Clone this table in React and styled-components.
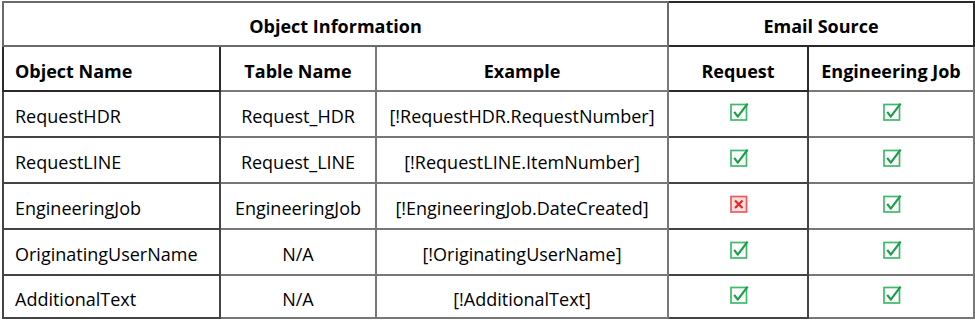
import React from 'react';
import styled, {createGlobalStyle} from 'styled-components';

const GlobalStyle = createGlobalStyle`
  html, body {
    margin: 0;
    background: #ffffff;
  }
  body {
    font-family: "Open Sans", "Noto Sans", sans-serif;
    color: #000;
  }
`;

const Wrap = styled.div`
  padding: 1px 2px 0 2px;
  width: 975px;
  box-sizing: border-box;
`;

const Table = styled.table`
  border-collapse: collapse;
  table-layout: fixed;
  width: 971px;
  font-size: 18px;
  border: 2px solid #3a3a3a;
`;

const Row = styled.tr`
  height: ${p => p.$h || 46}px;
`;

const Cell = styled.td`
  padding: 4px 11px 0 11px;
  box-sizing: border-box;
  text-align: ${p => (p.$left ? 'left' : 'center')};
  vertical-align: middle;
  border: 2px solid ${p => p.$line || '#555'};
  font-weight: ${p => (p.$bold ? 700 : 400)};
  white-space: nowrap;
`;

const HeadCell = styled(Cell).attrs({as: 'th'})``;

const Mark = styled.svg`
  display: block;
  margin: -9px auto 0 auto;
  width: 19px;
  height: 19px;
  position: relative;
  left: 1px;
`;

const Check = () => (
  <Mark viewBox="0 0 19 19">
    <rect x="1" y="2.5" width="15.5" height="15.5" fill="#fff" stroke="#3dbb6a" strokeWidth="1.7" />
    <path d="M4.2 9.8 L7.8 14.6 L17.6 1.6" fill="none" stroke="#1f9d4c" strokeWidth="2.2" strokeLinejoin="round" />
  </Mark>
);

const Cross = () => (
  <Mark viewBox="0 0 19 19">
    <rect x="1" y="2.5" width="15.5" height="15.5" fill="#fde0e0" stroke="#f2585c" strokeWidth="1.7" />
    <path d="M5 6.5 L12.5 14 M12.5 6.5 L5 14" fill="none" stroke="#e8232a" strokeWidth="2.2" />
  </Mark>
);

const rows = [
  {name: 'RequestHDR', table: 'Request_HDR', example: '[!RequestHDR.RequestNumber]', request: true, job: true},
  {name: 'RequestLINE', table: 'Request_LINE', example: '[!RequestLINE.ItemNumber]', request: true, job: true},
  {name: 'EngineeringJob', table: 'EngineeringJob', example: '[!EngineeringJob.DateCreated]', request: false, job: true},
  {name: 'OriginatingUserName', table: 'N/A', example: '[!OriginatingUserName]', request: true, job: true},
  {name: 'AdditionalText', table: 'N/A', example: '[!AdditionalText]', request: true, job: true},
];

const App = () => (
  <>
    <GlobalStyle />
    <Wrap>
      <Table>
        <colgroup>
          <col style={{width: 217}} />
          <col style={{width: 156}} />
          <col style={{width: 292}} />
          <col style={{width: 140}} />
          <col style={{width: 166}} />
        </colgroup>
        <thead>
          <Row $h={44}>
            <HeadCell colSpan={3} $bold $line="#6a6a6a">Object Information</HeadCell>
            <HeadCell colSpan={2} $bold $line="#2a2a2a">Email Source</HeadCell>
          </Row>
          <Row $h={45}>
            <HeadCell $bold $left $line="#2a2a2a">Object Name</HeadCell>
            <HeadCell $bold $line="#7a7a7a">Table Name</HeadCell>
            <HeadCell $bold $line="#7a7a7a">Example</HeadCell>
            <HeadCell $bold $line="#2a2a2a">Request</HeadCell>
            <HeadCell $bold $line="#7a7a7a">Engineering Job</HeadCell>
          </Row>
        </thead>
        <tbody>
          {rows.map((r, i) => (
            <Row key={r.name} $h={i === rows.length - 1 ? 43 : 46}>
              <Cell $left $line="#444">{r.name}</Cell>
              <Cell $line="#777">{r.table}</Cell>
              <Cell $line="#777">{r.example}</Cell>
              <Cell $line="#444">{r.request ? <Check /> : <Cross />}</Cell>
              <Cell $line="#777">{r.job ? <Check /> : <Cross />}</Cell>
            </Row>
          ))}
        </tbody>
      </Table>
    </Wrap>
  </>
);

export default App;
